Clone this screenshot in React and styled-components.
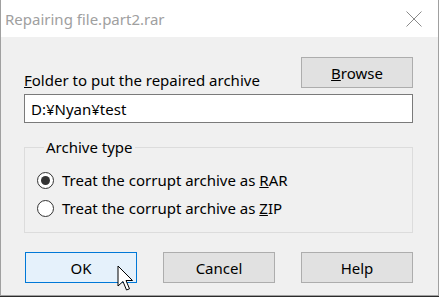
import React from 'react';
import styled, { createGlobalStyle } from 'styled-components';

const GlobalStyle = createGlobalStyle`
  body {
    margin: 0;
    background: #2b2b2b;
    font-family: "Noto Sans", "Open Sans", sans-serif;
  }
`;

const Window = styled.div`
  position: relative;
  width: 439px;
  height: 296px;
  box-sizing: border-box;
  border: 1px solid #a0a0a0;
  border-top: none;
  background: #f0f0f0;
  display: flex;
  flex-direction: column;
`;

const TitleBar = styled.div`
  height: 37px;
  flex: none;
  background: #fff;
  display: flex;
  align-items: center;
  justify-content: space-between;
  padding: 0 16px 0 4px;
`;

const Title = styled.span`
  font-size: 15px;
  color: #a0a0a0;
  margin-top: 1px;
`;

const CloseIcon = styled.svg`
  display: block;
  margin-top: 1px;
`;

const Body = styled.div`
  padding: 20px 25px 0 23px;
  font-size: 15px;
  line-height: 20px;
  color: #000;
`;

const HeaderRow = styled.div`
  display: flex;
  justify-content: space-between;
  align-items: flex-end;
`;

const Label = styled.label`
  margin-bottom: -2px;
`;

const Button = styled.button`
  width: 112px;
  height: 31px;
  box-sizing: border-box;
  font: inherit;
  color: #000;
  background: ${props => (props.$default ? '#e5f1fb' : '#e1e1e1')};
  border: 1px solid ${props => (props.$default ? '#0078d7' : '#adadad')};
  padding: 0;
`;

const PathInput = styled.input`
  display: block;
  margin-top: 6px;
  width: 389px;
  height: 29px;
  box-sizing: border-box;
  border: 1px solid #7a7a7a;
  background: #fff;
  font: inherit;
  color: #000;
  padding: 0 6px;
  outline: none;
`;

const Group = styled.fieldset`
  margin: 14px 0 0;
  width: 389px;
  box-sizing: border-box;
  border: 1px solid #dcdcdc;
  padding: 9px 0 10px 12px;
`;

const Legend = styled.legend`
  margin-left: 7px;
  padding: 0 2px;
  line-height: 20px;
`;

const RadioRow = styled.label`
  display: flex;
  align-items: center;
  height: 28px;
  gap: 8px;
`;

const RadioCircle = styled.span`
  width: 17px;
  height: 17px;
  box-sizing: border-box;
  border-radius: 50%;
  border: 1px solid #333;
  background: #fff;
  display: flex;
  align-items: center;
  justify-content: center;

  &::after {
    content: '';
    width: 9px;
    height: 9px;
    border-radius: 50%;
    background: ${props => (props.$checked ? '#333' : 'transparent')};
  }
`;

const ButtonRow = styled.div`
  display: flex;
  justify-content: space-between;
  margin-top: 19px;
  padding-left: 1px;
`;

const Cursor = styled.svg`
  position: absolute;
  left: 116px;
  top: 265px;
`;

const Radio = ({ checked, children }) => (
  <RadioRow>
    <RadioCircle $checked={checked} />
    <span>{children}</span>
  </RadioRow>
);

const App = () => {
  return (
    <>
      <GlobalStyle />
      <Window>
        <TitleBar>
          <Title>Repairing file.part2.rar</Title>
          <CloseIcon width="16" height="16" viewBox="0 0 16 16">
            <path d="M0.5 0.5 L15.5 15.5 M15.5 0.5 L0.5 15.5" stroke="#8a8a8a" strokeWidth="1" fill="none" />
          </CloseIcon>
        </TitleBar>
        <Body>
          <HeaderRow>
            <Label htmlFor="path"><u>F</u>older to put the repaired archive</Label>
            <Button><u>B</u>rowse</Button>
          </HeaderRow>
          <PathInput id="path" defaultValue="D:¥Nyan¥test" />
          <Group>
            <Legend>Archive type</Legend>
            <Radio checked>Treat the corrupt archive as <u>R</u>AR</Radio>
            <Radio>Treat the corrupt archive as <u>Z</u>IP</Radio>
          </Group>
          <ButtonRow>
            <Button $default>OK</Button>
            <Button>Cancel</Button>
            <Button>Help</Button>
          </ButtonRow>
        </Body>
        <Cursor width="20" height="28" viewBox="0 0 20 28">
          <path d="M1 1 L1 21 L6 16.5 L9.5 25 L12.5 23.8 L9 15.5 L15.5 15.5 Z" fill="#fff" stroke="#000" strokeWidth="1" strokeLinejoin="miter" />
        </Cursor>
      </Window>
    </>
  );
};

export default App;
